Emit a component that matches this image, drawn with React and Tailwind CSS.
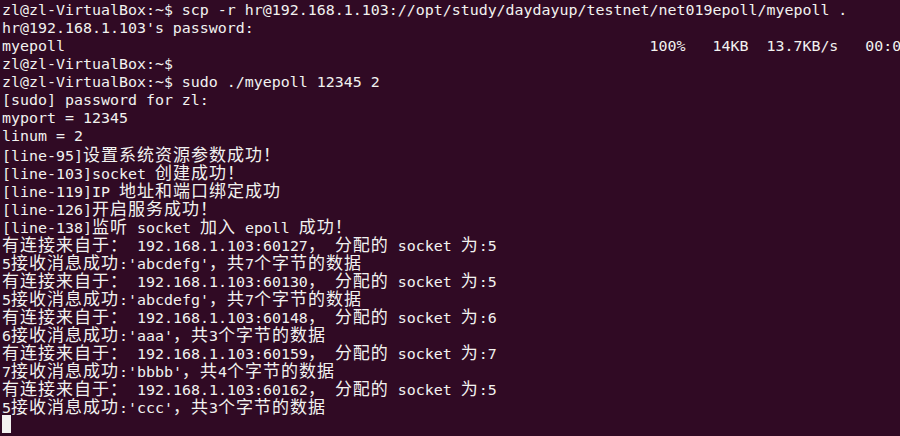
import React from "react";

const LINES = [
  "zl@zl-VirtualBox:~$ scp -r hr@192.168.1.103://opt/study/daydayup/testnet/net019epoll/myepoll .",
  "hr@192.168.1.103's password: ",
  "myepoll                                                                 100%   14KB  13.7KB/s   00:00    ",
  "zl@zl-VirtualBox:~$ ",
  "zl@zl-VirtualBox:~$ sudo ./myepoll 12345 2",
  "[sudo] password for zl: ",
  "myport = 12345",
  "linum = 2",
  "[line-95]设置系统资源参数成功！",
  "[line-103]socket 创建成功！",
  "[line-119]IP 地址和端口绑定成功",
  "[line-126]开启服务成功！",
  "[line-138]监听 socket 加入 epoll 成功！",
  "有连接来自于： 192.168.1.103:60127， 分配的 socket 为:5",
  "5接收消息成功:'abcdefg'，共7个字节的数据",
  "有连接来自于： 192.168.1.103:60130， 分配的 socket 为:5",
  "5接收消息成功:'abcdefg'，共7个字节的数据",
  "有连接来自于： 192.168.1.103:60148， 分配的 socket 为:6",
  "6接收消息成功:'aaa'，共3个字节的数据",
  "有连接来自于： 192.168.1.103:60159， 分配的 socket 为:7",
  "7接收消息成功:'bbbb'，共4个字节的数据",
  "有连接来自于： 192.168.1.103:60162， 分配的 socket 为:5",
  "5接收消息成功:'ccc'，共3个字节的数据",
];

// split a line into runs of half-width and full-width characters
function splitRuns(line) {
  const runs = [];
  for (const ch of line) {
    const wide = ch.codePointAt(0) >= 0x2e80;
    const last = runs[runs.length - 1];
    if (last && last.wide === wide) last.text += ch;
    else runs.push({ wide, text: ch });
  }
  return runs;
}

function Row({ text }) {
  return (
    <div className="h-[18px] leading-[18px] whitespace-pre">
      {splitRuns(text).map((run, i) =>
        run.wide ? (
          <span
            key={i}
            className="text-[17px] tracking-[1px] font-['Noto_Sans_CJK_SC',sans-serif]"
          >
            {run.text}
          </span>
        ) : (
          <span key={i}>{run.text}</span>
        )
      )}
    </div>
  );
}

export default function App() {
  return (
    <div className="w-[900px] h-[436px] overflow-hidden bg-[#300a24] text-[#f2f2f0] pl-[2px] pt-[1px] text-[14.95px] font-['DejaVu_Sans_Mono',monospace]">
      {LINES.map((line, i) => (
        <Row key={i} text={line} />
      ))}
      <div className="h-[18px] flex">
        <span className="w-[9px] h-[18px] bg-[#f2f2f0]" />
      </div>
    </div>
  );
}
